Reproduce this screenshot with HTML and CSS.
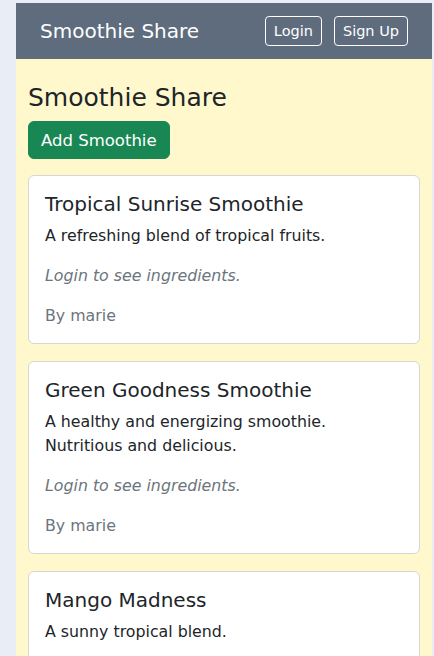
FILE: index.html
```html
<!DOCTYPE html>
<html lang="en">
<head>
<meta charset="utf-8">
<title>Smoothie Share</title>
<link rel="stylesheet" href="styles.css">
</head>
<body>
<div class="app">
  <nav class="navbar">
    <span class="brand">Smoothie Share</span>
    <div class="nav-actions">
      <button class="btn-outline">Login</button>
      <button class="btn-outline">Sign Up</button>
    </div>
  </nav>
  <main class="main">
    <h1 class="page-title">Smoothie Share</h1>
    <button class="btn-add">Add Smoothie</button>
    <div class="card-list">
      <div class="card">
        <h2 class="card-title">Tropical Sunrise Smoothie</h2>
        <p class="card-text">A refreshing blend of tropical fruits.</p>
        <p class="card-note">Login to see ingredients.</p>
        <p class="card-author">By marie</p>
      </div>
      <div class="card">
        <h2 class="card-title">Green Goodness Smoothie</h2>
        <p class="card-text">A healthy and energizing smoothie. Nutritious and delicious.</p>
        <p class="card-note">Login to see ingredients.</p>
        <p class="card-author">By marie</p>
      </div>
      <div class="card">
        <h2 class="card-title">Mango Madness</h2>
        <p class="card-text">A sunny tropical blend.</p>
        <p class="card-note">Login to see ingredients.</p>
        <p class="card-author">By marie</p>
      </div>
    </div>
  </main>
</div>
</body>
</html>
```

FILE: styles.css
```css
* { box-sizing: border-box; }
html, body { margin: 0; padding: 0; }
body {
  background: #e9edf6;
  font-family: "DejaVu Sans", "Liberation Sans", sans-serif;
  color: #212529;
  padding: 3px 2px 0 16px;
}
.app {
  background: #fff8cd;
  min-height: 653px;
}
.navbar {
  height: 56px;
  background: #5e6c7e;
  display: flex;
  align-items: center;
  justify-content: space-between;
  padding: 0 24px;
}
.brand {
  color: #ffffff;
  font-size: 20px;
}
.nav-actions {
  display: flex;
  gap: 12px;
}
.btn-outline {
  font-family: inherit;
  font-size: 14.5px;
  color: #ffffff;
  background: transparent;
  border: 1px solid #ffffff;
  border-radius: 4px;
  height: 30px;
  padding: 0 8px;
}
.main {
  padding: 24px 12px 0 12px;
}
.page-title {
  margin: 0 0 8px 0;
  font-weight: 400;
  font-size: 25px;
  line-height: 30px;
}
.btn-add {
  font-family: inherit;
  font-size: 16.5px;
  color: #ffffff;
  background: #198754;
  border: 1px solid #198754;
  border-radius: 6px;
  height: 38px;
  padding: 0 12px;
}
.card-list {
  margin-top: 16px;
  display: flex;
  flex-direction: column;
  gap: 17px;
}
.card {
  background: #ffffff;
  border: 1px solid #d6d6d6;
  border-radius: 6px;
  padding: 16px 16px 15px 16px;
}
.card-title {
  margin: 0 0 8px 0;
  font-weight: 400;
  font-size: 20px;
  line-height: 24px;
}
.card-text {
  margin: 0 0 16px 0;
  font-size: 15.8px;
  line-height: 24px;
}
.card-note {
  margin: 0 0 16px 0;
  font-size: 15.8px;
  line-height: 24px;
  font-style: italic;
  color: #6c757d;
}
.card-author {
  margin: 0;
  font-size: 15.8px;
  line-height: 24px;
  color: #6c757d;
}
```
